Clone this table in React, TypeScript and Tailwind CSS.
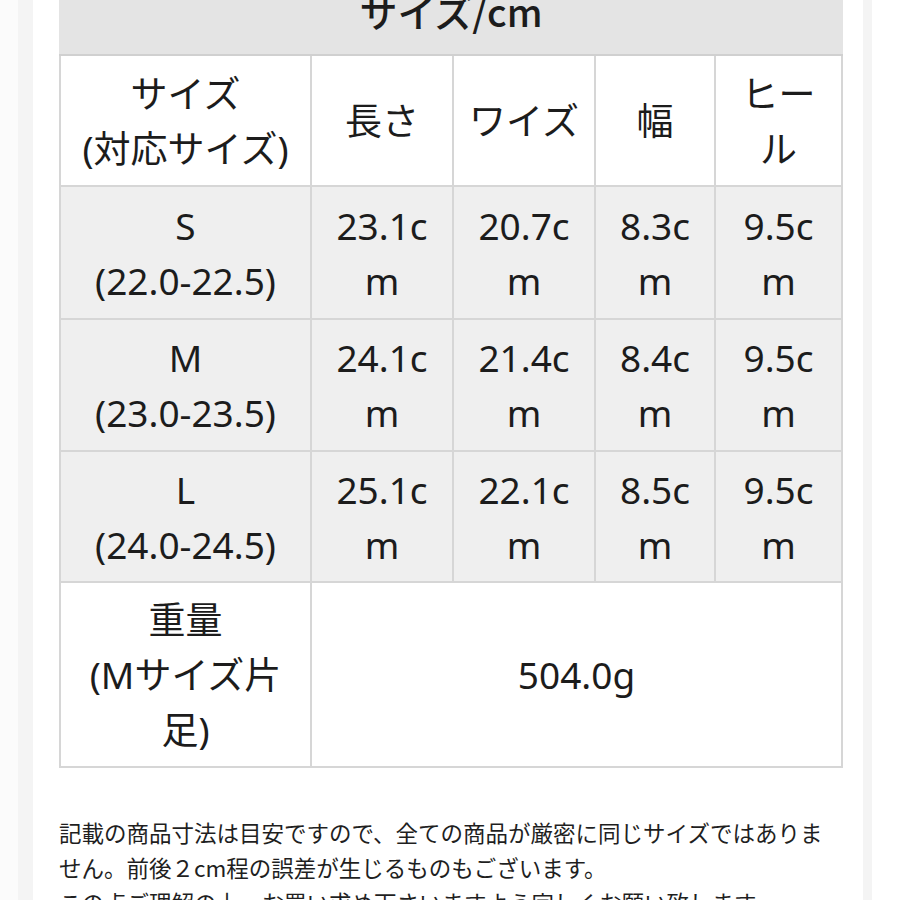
import React from "react"

const ROWS = [
  { size: "S", range: "(22.0-22.5)", vals: ["23.1c", "20.7c", "8.3c", "9.5c"], h: "h-[133px]" },
  { size: "M", range: "(23.0-23.5)", vals: ["24.1c", "21.4c", "8.4c", "9.5c"], h: "h-[132px]" },
  { size: "L", range: "(24.0-24.5)", vals: ["25.1c", "22.1c", "8.5c", "9.5c"], h: "h-[131px]" },
]

const cell = "border-2 border-[#d6d6d6] text-center align-middle"

export default function App() {
  return (
    <div className="w-[900px] h-[900px] overflow-hidden bg-white flex text-[#1c1c1c] font-['Noto_Sans','Noto_Sans_CJK_JP',sans-serif]">
      <div className="w-[18px] shrink-0 bg-[#fbfbfb]" />
      <div className="w-[15px] shrink-0 bg-[#f4f4f4]" />
      <div className="w-[4px] shrink-0" />

      <div className="w-[826px] shrink-0 px-[22px]">
        <table className="w-[782px] table-fixed border-collapse -mt-[36px] text-[37px] leading-[55px]">
          <colgroup>
            <col className="w-[251px]" />
            <col className="w-[142px]" />
            <col className="w-[142px]" />
            <col className="w-[120px]" />
            <col className="w-[127px]" />
          </colgroup>
          <tbody>
            <tr className="h-[90px]">
              <td colSpan={5} className="bg-[#e4e4e4] border-2 border-[#e4e4e4] border-b-[#d0d0d0] text-center font-medium text-[38px] font-['Noto_Sans_CJK_JP',sans-serif]">
                サイズ/cm
              </td>
            </tr>
            <tr className="h-[131px] bg-white">
              <td className={cell}>サイズ<br />(対応サイズ)</td>
              <td className={cell}>長さ</td>
              <td className={cell}>ワイズ</td>
              <td className={cell}>幅</td>
              <td className={cell}>ヒー<br />ル</td>
            </tr>
            {ROWS.map((r) => (
              <tr key={r.size} className={`${r.h} bg-[#efefef]`}>
                <td className={cell}>{r.size}<br />{r.range}</td>
                {r.vals.map((v, i) => (
                  <td key={i} className={cell}>{v}<br />m</td>
                ))}
              </tr>
            ))}
            <tr className="h-[185px] bg-white">
              <td className={cell}>重量<br />(Mサイズ片<br />足)</td>
              <td colSpan={4} className={cell}>504.0g</td>
            </tr>
          </tbody>
        </table>

        <p className="mt-[47px] text-[22.5px] leading-[35px] whitespace-nowrap text-[#1f1f1f] font-['Noto_Sans_CJK_JP',sans-serif]">
          記載の商品寸法は目安ですので、全ての商品が厳密に同じサイズではありま<br />
          せん。前後２cm程の誤差が生じるものもございます。<br />
          この点ご理解の上、お買い求め下さいますよう宜しくお願い致します。
        </p>
      </div>

      <div className="w-[9px] shrink-0 bg-[#f4f4f4]" />
      <div className="flex-1" />
    </div>
  )
}
